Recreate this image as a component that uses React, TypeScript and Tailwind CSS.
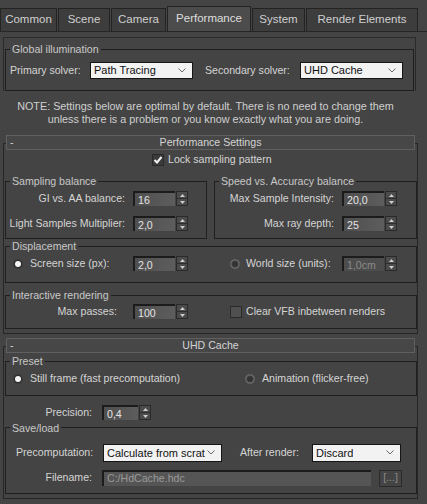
import React from 'react';

// 3ds Max / V-Ray style render setup panel

function Group({ title, className, children }: { title: string; className: string; children?: React.ReactNode }) {
  return (
    <fieldset className={`border border-[#1f1f1f] ${className}`}>
      <legend className="ml-[4px] px-[2px] text-[10.6px] leading-[12px] text-[#c8c8c8]">{title}</legend>
      {children}
    </fieldset>
  );
}

function Spinner({ value, inputClass, disabled }: { value: string; inputClass: string; disabled?: boolean }) {
  return (
    <div className="flex h-[15px] gap-[1px]">
      <div
        className={`${inputClass} flex items-center border-t-2 border-l-2 border-[#1c1c1c] pl-[3px] leading-none ${
          disabled ? 'bg-[#4d4d4d] text-[#8a8a8a]' : 'bg-gradient-to-r from-[#4f4f4f] to-[#5d5d5d] text-[#e4e4e4]'
        }`}
      >
        {value}
      </div>
      <div className="flex w-[12px] flex-col border border-[#2a2a2a] bg-[#4b4b4b]">
        <div className="flex flex-1 items-center justify-center border-b border-[#2e2e2e]">
          <svg width="5" height="3" viewBox="0 0 5 3">
            <path d="M0 3 L2.5 0 L5 3Z" fill="#cfcfcf" />
          </svg>
        </div>
        <div className="flex flex-1 items-center justify-center">
          <svg width="5" height="3" viewBox="0 0 5 3">
            <path d="M0 0 L5 0 L2.5 3Z" fill="#cfcfcf" />
          </svg>
        </div>
      </div>
    </div>
  );
}

function Select({ value, className }: { value: string; className: string }) {
  return (
    <div className={`${className} flex items-center justify-between border border-[#151515] bg-[#f2f2f2] pl-[3px] pr-[6px] text-[11px] text-[#111]`}>
      <span className="overflow-hidden">{value}</span>
      <svg width="8" height="5" viewBox="0 0 8 5" className="shrink-0">
        <path d="M0.5 0.5 L4 4 L7.5 0.5" fill="none" stroke="#6a6a6a" strokeWidth="1" />
      </svg>
    </div>
  );
}

function Radio({ checked }: { checked?: boolean }) {
  return (
    <svg width="10" height="10" viewBox="0 0 10 10" className="shrink-0">
      {checked ? (
        <>
          <circle cx="5" cy="5" r="4.5" fill="#2e2e2e" />
          <circle cx="5" cy="5" r="3" fill="#f4f4f4" />
        </>
      ) : (
        <>
          <circle cx="5" cy="5" r="4.2" fill="#3a3a3a" stroke="#6e6e6e" strokeWidth="1.2" />
          <circle cx="5" cy="5" r="2.2" fill="#333" />
        </>
      )}
    </svg>
  );
}

function Checkbox({ checked }: { checked?: boolean }) {
  return (
    <div className={`flex h-[12px] w-[12px] shrink-0 items-center justify-center border border-[#2a2a2a] ${checked ? 'bg-[#3b3b3b]' : 'bg-[#505050]'}`}>
      {checked && (
        <svg width="10" height="10" viewBox="0 0 10 10">
          <path d="M1.5 5 L4 7.5 L8.5 2" fill="none" stroke="#f2f2f2" strokeWidth="2" />
        </svg>
      )}
    </div>
  );
}

function RolloutHeader({ title }: { title: string }) {
  return (
    <div className="relative z-10 ml-[6px] flex h-[15px] w-[409px] items-center border border-[#606060] bg-[#474747] leading-none">
      <span className="w-[12px] pl-[3px]">-</span>
      <span className="flex-1 pr-[12px] text-center">{title}</span>
    </div>
  );
}

const tabs = [
  { name: 'Common', w: 'w-[57px]' },
  { name: 'Scene', w: 'w-[52px]' },
  { name: 'Camera', w: 'w-[55px]' },
  { name: 'Performance', w: 'w-[84px]', active: true },
  { name: 'System', w: 'w-[53px]' },
  { name: 'Render Elements', w: 'w-[112px]' },
];

export default function App() {
  return (
    <div className="h-[504px] w-[427px] overflow-hidden whitespace-nowrap bg-[#444444] font-['Liberation_Sans',Arial,sans-serif] text-[10.6px] text-[#d4d4d4]">
      {/* Tabs */}
      <div className="flex h-[32px] items-end gap-[1px] border-b border-[#262626]">
        {tabs.map((t) => (
          <div
            key={t.name}
            className={`${t.w} flex items-center justify-center border-x border-t border-[#232323] text-[11.5px] ${
              t.active ? 'h-[25px] bg-[#4c4c4c] text-[#dedede]' : 'h-[23px] bg-[#3d3d3d] text-[#cfcfcf]'
            }`}
          >
            {t.name}
          </div>
        ))}
      </div>

      {/* Global illumination */}
      <div className="ml-[3px] mt-[5px] w-[413px] border-x border-t border-[#2a2a2a] pt-[5px]">
        <Group title="Global illumination" className="ml-[1px] h-[48px] w-[409px]">
          <div className="mt-[7px] flex h-[17px] items-center pl-[4px]">
            <span className="w-[80px]">Primary solver:</span>
            <Select value="Path Tracing" className="h-[17px] w-[103px]" />
            <span className="ml-[12px] w-[95px]">Secondary solver:</span>
            <Select value="UHD Cache" className="h-[17px] w-[103px]" />
          </div>
        </Group>
      </div>

      {/* Note */}
      <div className="mt-[9px] w-[411px] text-center text-[10.8px] leading-[13px] text-[#cfcfcf]">
        NOTE: Settings below are optimal by default. There is no need to change them
        <br />
        unless there is a problem or you know exactly what you are doing.
      </div>

      {/* Performance Settings */}
      <div className="mt-[9px]">
        <RolloutHeader title="Performance Settings" />
        <div className="-mt-[7px] ml-[3px] w-[415px] border border-[#262626] pb-[4px]">
          <div className="box-content flex h-[14px] items-center gap-[4px] pl-[148px] pt-[9px]">
            <Checkbox checked />
            <span>Lock sampling pattern</span>
          </div>

          <div className="mt-[8px] flex">
            <Group title="Sampling balance" className="ml-[1px] h-[64px] w-[202px]">
              <div className="mt-[4px] flex items-center">
                <span className="w-[119px] text-right">GI vs. AA balance:</span>
                <div className="ml-[8px]">
                  <Spinner value="16" inputClass="w-[42px]" />
                </div>
              </div>
              <div className="mt-[9px] flex items-center">
                <span className="w-[119px] text-right">Light Samples Multiplier:</span>
                <div className="ml-[8px]">
                  <Spinner value="2,0" inputClass="w-[42px]" />
                </div>
              </div>
            </Group>
            <Group title="Speed vs. Accuracy balance" className="ml-[7px] h-[64px] w-[203px]">
              <div className="mt-[4px] flex items-center">
                <span className="w-[119px] text-right">Max Sample Intensity:</span>
                <div className="ml-[8px]">
                  <Spinner value="20,0" inputClass="w-[42px]" />
                </div>
              </div>
              <div className="mt-[9px] flex items-center">
                <span className="w-[119px] text-right">Max ray depth:</span>
                <div className="ml-[8px]">
                  <Spinner value="25" inputClass="w-[42px]" />
                </div>
              </div>
            </Group>
          </div>

          <Group title="Displacement" className="ml-[1px] mt-[1px] h-[43px] w-[412px]">
            <div className="mt-[4px] flex items-center">
              <div className="ml-[7px]">
                <Radio checked />
              </div>
              <span className="ml-[7px] w-[103px]">Screen size (px):</span>
              <Spinner value="2,0" inputClass="w-[42px]" />
              <div className="ml-[42px]">
                <Radio />
              </div>
              <span className="ml-[6px] w-[96px]">World size (units):</span>
              <Spinner value="1,0cm" inputClass="w-[42px]" disabled />
            </div>
          </Group>

          <Group title="Interactive rendering" className="ml-[1px] mt-[6px] h-[40px] w-[412px]">
            <div className="mt-[3px] flex items-center">
              <span className="w-[111px] text-right">Max passes:</span>
              <div className="ml-[16px]">
                <Spinner value="100" inputClass="w-[42px]" />
              </div>
              <div className="ml-[42px] flex items-center gap-[4px]">
                <Checkbox />
                <span>Clear VFB inbetween renders</span>
              </div>
            </div>
          </Group>
        </div>
      </div>

      {/* UHD Cache */}
      <div className="mt-[4px]">
        <RolloutHeader title="UHD Cache" />
        <div className="-mt-[7px] ml-[3px] w-[415px] border border-[#262626] pb-[4px] pt-[8px]">
          <Group title="Preset" className="ml-[1px] h-[41px] w-[412px]">
            <div className="mt-[5px] flex h-[14px] items-center">
              <div className="ml-[7px]">
                <Radio checked />
              </div>
              <span className="ml-[7px] w-[215px]">Still frame (fast precomputation)</span>
              <Radio />
              <span className="ml-[7px]">Animation (flicker-free)</span>
            </div>
          </Group>

          <div className="mt-[9px] flex items-center">
            <span className="w-[88px] text-right">Precision:</span>
            <div className="ml-[10px]">
              <Spinner value="0,4" inputClass="w-[36px]" />
            </div>
          </div>

          <Group title="Save/load" className="ml-[1px] mt-[1px] h-[72px] w-[412px]">
            <div className="mt-[10px] flex items-center pl-[10px]">
              <span className="w-[87px]">Precomputation:</span>
              <Select value="Calculate from scrat" className="h-[18px] w-[119px]" />
              <span className="ml-[18px] w-[72px]">After render:</span>
              <Select value="Discard" className="h-[18px] w-[89px]" />
            </div>
            <div className="mt-[8px] flex items-center">
              <span className="w-[86px] text-right">Filename:</span>
              <div className="ml-[10px] flex h-[16px] w-[269px] items-center border-t-2 border-l-2 border-[#1c1c1c] bg-[#555555] pl-[3px] text-[#9a9a9a]">
                C:/HdCache.hdc
              </div>
              <div className="ml-[8px] flex h-[17px] w-[23px] items-center justify-center border border-[#2a2a2a] text-[#8a8a8a]">
                [...]
              </div>
            </div>
          </Group>
        </div>
      </div>
    </div>
  );
}
